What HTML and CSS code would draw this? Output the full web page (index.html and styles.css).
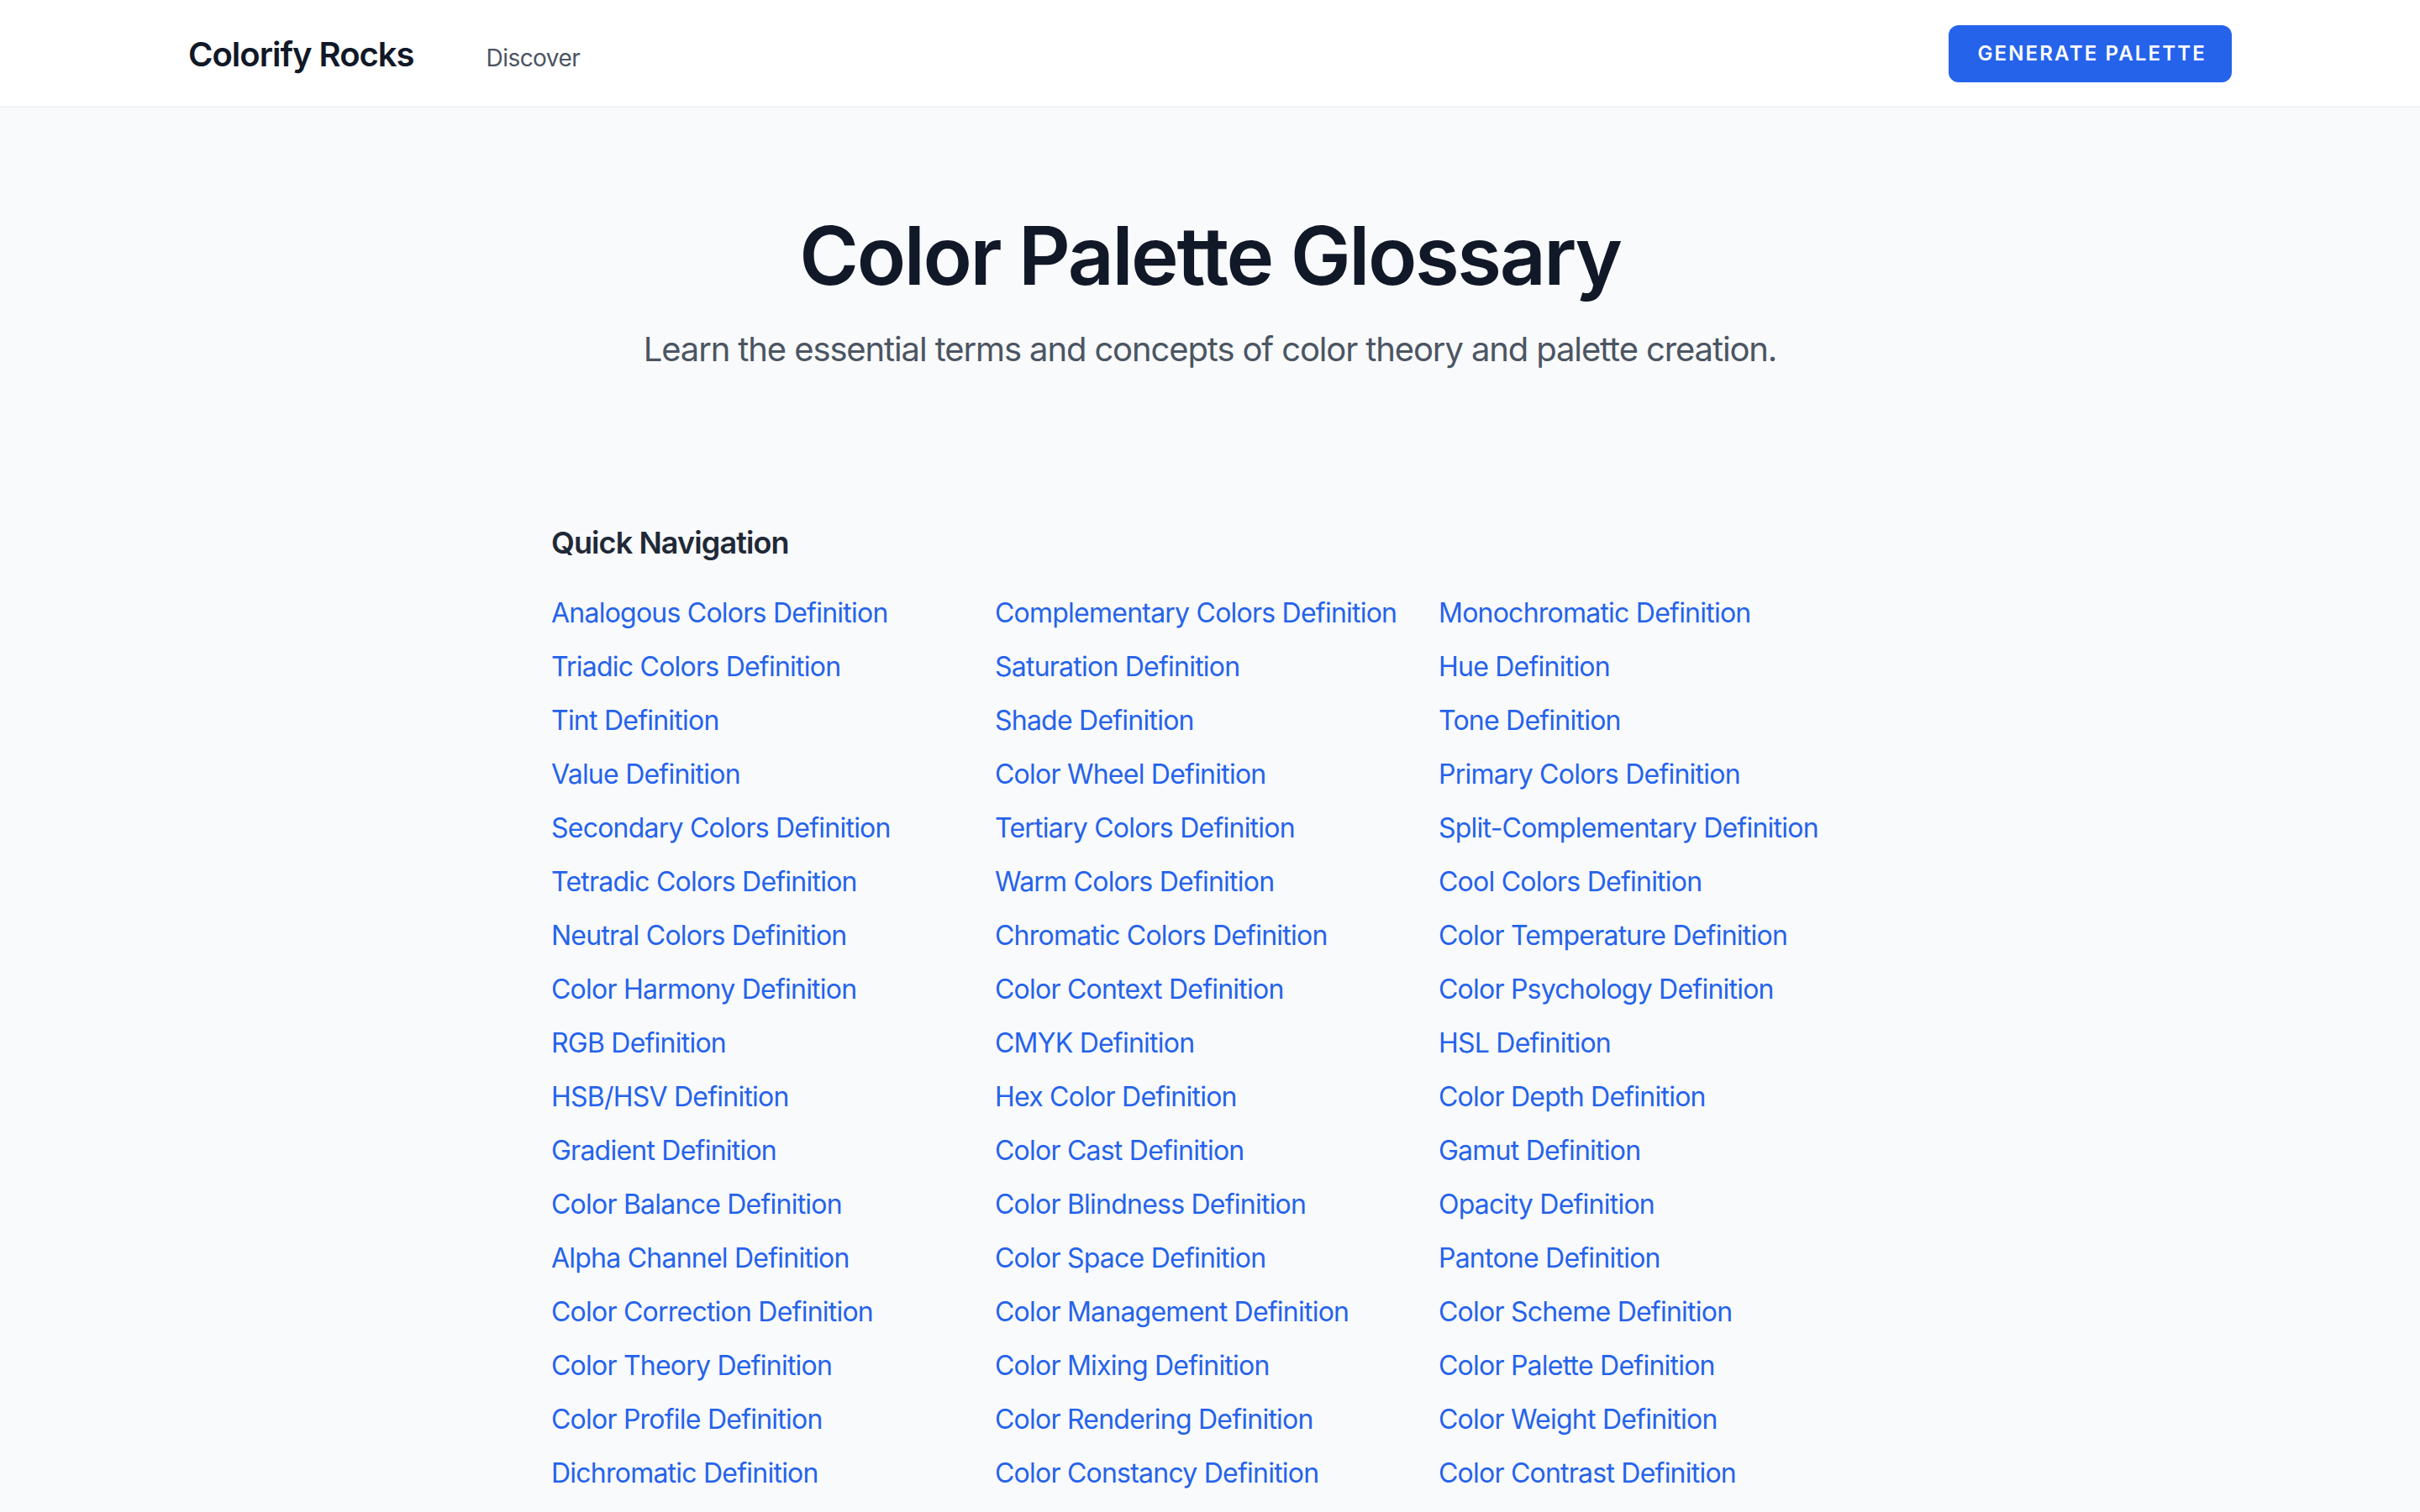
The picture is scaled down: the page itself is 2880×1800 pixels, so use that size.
FILE: index.html
```html
<!DOCTYPE html>
<html lang="en">
<head>
<meta charset="utf-8">
<title>Color Palette Glossary - Colorify Rocks</title>
<link rel="stylesheet" href="styles.css">
</head>
<body>
<header class="site-header">
  <div class="header-inner">
    <div class="header-left">
      <a class="logo" href="#">Colorify Rocks</a>
      <nav class="main-nav"><a href="#">Discover</a></nav>
    </div>
    <a class="btn-generate" href="#">Generate Palette</a>
  </div>
</header>
<main>
  <section class="hero">
    <h1 class="hero-title">Color Palette Glossary</h1>
    <p class="hero-sub">Learn the essential terms and concepts of color theory and palette creation.</p>
  </section>
  <section class="quick-nav">
    <h2 class="quick-title">Quick Navigation</h2>
    <ul class="link-grid">
      <li><a href="#">Analogous Colors Definition</a></li>
      <li><a href="#">Complementary Colors Definition</a></li>
      <li><a href="#">Monochromatic Definition</a></li>
      <li><a href="#">Triadic Colors Definition</a></li>
      <li><a href="#">Saturation Definition</a></li>
      <li><a href="#">Hue Definition</a></li>
      <li><a href="#">Tint Definition</a></li>
      <li><a href="#">Shade Definition</a></li>
      <li><a href="#">Tone Definition</a></li>
      <li><a href="#">Value Definition</a></li>
      <li><a href="#">Color Wheel Definition</a></li>
      <li><a href="#">Primary Colors Definition</a></li>
      <li><a href="#">Secondary Colors Definition</a></li>
      <li><a href="#">Tertiary Colors Definition</a></li>
      <li><a href="#">Split-Complementary Definition</a></li>
      <li><a href="#">Tetradic Colors Definition</a></li>
      <li><a href="#">Warm Colors Definition</a></li>
      <li><a href="#">Cool Colors Definition</a></li>
      <li><a href="#">Neutral Colors Definition</a></li>
      <li><a href="#">Chromatic Colors Definition</a></li>
      <li><a href="#">Color Temperature Definition</a></li>
      <li><a href="#">Color Harmony Definition</a></li>
      <li><a href="#">Color Context Definition</a></li>
      <li><a href="#">Color Psychology Definition</a></li>
      <li><a href="#">RGB Definition</a></li>
      <li><a href="#">CMYK Definition</a></li>
      <li><a href="#">HSL Definition</a></li>
      <li><a href="#">HSB/HSV Definition</a></li>
      <li><a href="#">Hex Color Definition</a></li>
      <li><a href="#">Color Depth Definition</a></li>
      <li><a href="#">Gradient Definition</a></li>
      <li><a href="#">Color Cast Definition</a></li>
      <li><a href="#">Gamut Definition</a></li>
      <li><a href="#">Color Balance Definition</a></li>
      <li><a href="#">Color Blindness Definition</a></li>
      <li><a href="#">Opacity Definition</a></li>
      <li><a href="#">Alpha Channel Definition</a></li>
      <li><a href="#">Color Space Definition</a></li>
      <li><a href="#">Pantone Definition</a></li>
      <li><a href="#">Color Correction Definition</a></li>
      <li><a href="#">Color Management Definition</a></li>
      <li><a href="#">Color Scheme Definition</a></li>
      <li><a href="#">Color Theory Definition</a></li>
      <li><a href="#">Color Mixing Definition</a></li>
      <li><a href="#">Color Palette Definition</a></li>
      <li><a href="#">Color Profile Definition</a></li>
      <li><a href="#">Color Rendering Definition</a></li>
      <li><a href="#">Color Weight Definition</a></li>
      <li><a href="#">Dichromatic Definition</a></li>
      <li><a href="#">Color Constancy Definition</a></li>
      <li><a href="#">Color Contrast Definition</a></li>
    </ul>
  </section>
</main>
</body>
</html>
```
FILE: styles.css
```css
* { box-sizing: border-box; }
html, body { margin: 0; padding: 0; }
body {
  font-family: "Inter", "Liberation Sans", sans-serif;
  background: #f9fafb;
  color: #111827;
  -webkit-font-smoothing: antialiased;
}
a { text-decoration: none; }

.site-header {
  background: #ffffff;
  height: 128px;
  border-bottom: 2px solid #f1f3f5;
}
.header-inner {
  max-width: 2560px;
  margin: 0 auto;
  padding: 0 64px;
  height: 100%;
  display: flex;
  align-items: center;
  justify-content: space-between;
}
.header-left {
  display: flex;
  align-items: center;
  gap: 86px;
}
.logo {
  font-size: 40px;
  font-weight: 600;
  color: #111827;
  letter-spacing: -0.025em;
  line-height: 56px;
  position: relative;
  top: 2px;
}
.main-nav a {
  font-size: 28px;
  color: #4b5563;
  letter-spacing: -0.02em;
  line-height: 40px;
  position: relative;
  top: 6px;
}
.btn-generate {
  background: #2563eb;
  color: #ffffff;
  font-size: 24px;
  font-weight: 600;
  letter-spacing: 0.09em;
  text-transform: uppercase;
  line-height: 32px;
  padding: 18px 30px 18px 34px;
  border-radius: 12px;
  position: relative;
  top: 1px;
}

.hero {
  text-align: center;
  padding-top: 128px;
}
.hero-title {
  margin: 0 0 36px;
  font-size: 96px;
  line-height: 96px;
  font-weight: 600;
  letter-spacing: -0.025em;
  color: #111827;
}
.hero-sub {
  margin: 0;
  font-size: 40px;
  line-height: 56px;
  letter-spacing: -0.028em;
  color: #4b5563;
}

.quick-nav {
  max-width: 1568px;
  margin: 174px auto 0;
  padding-right: 32px;
}
.quick-title {
  margin: 0 0 32px;
  font-size: 36px;
  line-height: 56px;
  font-weight: 600;
  letter-spacing: -0.025em;
  color: #1f2937;
}
.link-grid {
  list-style: none;
  margin: 0;
  padding: 0;
  display: grid;
  grid-template-columns: repeat(3, 1fr);
  column-gap: 48px;
  row-gap: 16px;
}
.link-grid li {
  font-size: 32px;
  line-height: 48px;
}
.link-grid a {
  letter-spacing: -0.024em;
  color: #2563eb;
}
```
